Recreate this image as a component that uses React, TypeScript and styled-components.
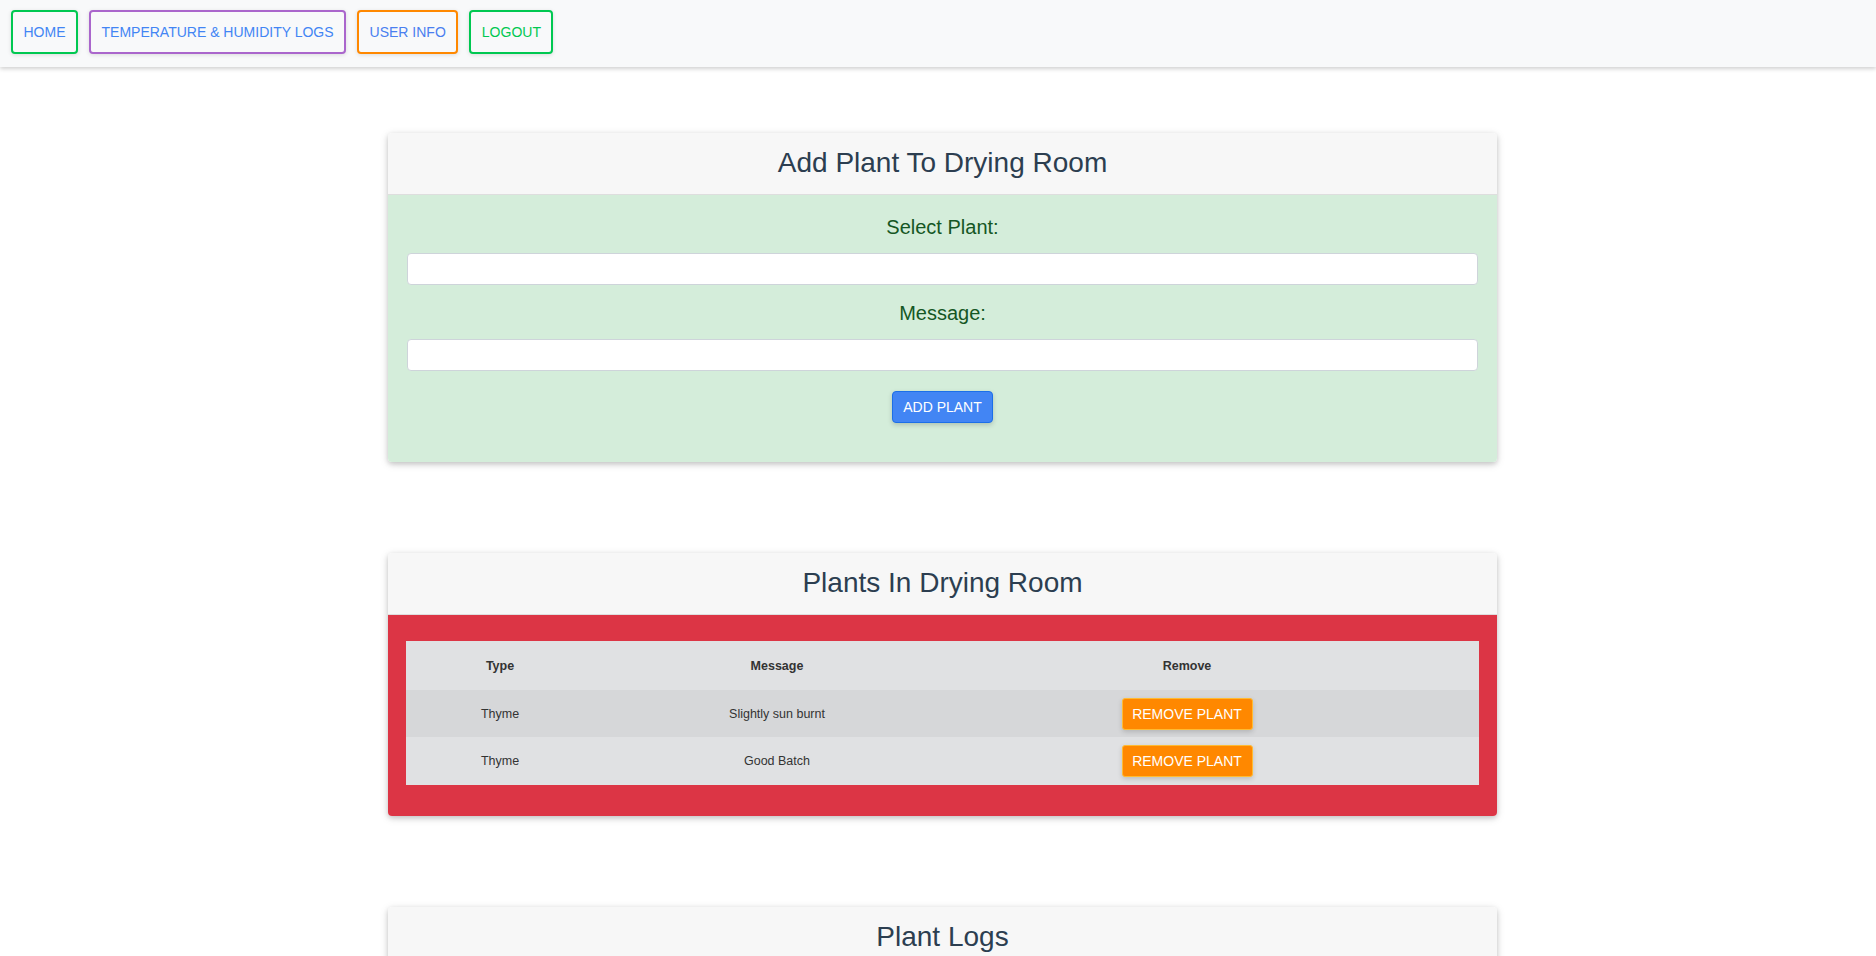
import React from "react";
import styled, { createGlobalStyle } from "styled-components";

const GlobalStyle = createGlobalStyle`
  html, body {
    margin: 0;
    padding: 0;
    background: #ffffff;
    font-family: "Liberation Sans", Arial, Helvetica, sans-serif;
  }
  * { box-sizing: border-box; }
`;

const NavBar = styled.nav`
  height: 67px;
  background: #f8f9fa;
  box-shadow: 0 2px 4px rgba(0, 0, 0, 0.18);
  display: flex;
  align-items: flex-start;
  gap: 11px;
  padding: 10px 10px 0 11px;
  position: relative;
  z-index: 1;
`;

const NavButton = styled.button<{ $border: string; $color: string }>`
  height: 44px;
  padding: 0 10.5px;
  border: 2px solid ${(p) => p.$border};
  border-radius: 4px;
  background: #f8f9fa;
  color: ${(p) => p.$color};
  font-family: "Liberation Sans", Arial, sans-serif;
  font-size: 14px;
  text-transform: uppercase;
  box-shadow: 0 1px 4px rgba(0, 0, 0, 0.12);
  cursor: pointer;
`;

const Main = styled.main`
  display: flex;
  flex-direction: column;
  align-items: center;
  gap: 91px;
  padding: 66px 0 40px 9px;
`;

const Card = styled.section`
  width: 1109px;
  background: #ffffff;
  border-radius: 4px;
  overflow: hidden;
  box-shadow: 0 2px 5px 0 rgba(0, 0, 0, 0.16), 0 2px 10px 0 rgba(0, 0, 0, 0.12);
`;

const CardHeader = styled.header`
  height: 62px;
  background: #f7f7f7;
  border-bottom: 1px solid #dedede;
  display: flex;
  align-items: center;
  justify-content: center;
  padding-bottom: 2px;
  font-size: 28px;
  color: #2c3e50;
`;

const FormBody = styled.div`
  background: #d4edda;
  display: flex;
  flex-direction: column;
  padding: 20px 19px 39px;
`;

const Label = styled.label`
  font-size: 20px;
  line-height: 24px;
  color: #155724;
  text-align: center;
  margin-bottom: 14px;
`;

const TextInput = styled.input<{ $gap: number }>`
  height: 32px;
  border: 1px solid #ced4da;
  border-radius: 4px;
  background: #ffffff;
  margin-bottom: ${(p) => p.$gap}px;
  padding: 0 10px;
  font-size: 14px;
`;

const PrimaryButton = styled.button`
  align-self: center;
  width: 101px;
  height: 32px;
  background: #4285f4;
  border: 1px solid #1c6fe8;
  border-radius: 4px;
  color: #ffffff;
  font-family: "Liberation Sans", Arial, sans-serif;
  font-size: 14px;
  text-transform: uppercase;
  padding: 0;
  box-shadow: 0 2px 5px rgba(0, 0, 0, 0.18);
  cursor: pointer;
`;

const TableBody = styled.div`
  background: #dc3545;
  padding: 26px 18px 31px;
`;

const Table = styled.div`
  display: grid;
  grid-template-columns: 188px 366px 1fr;
  color: #333333;
  font-size: 12.5px;
`;

const Row = styled.div<{ $bg: string; $h: number }>`
  display: contents;
  & > div {
    background: ${(p) => p.$bg};
    height: ${(p) => p.$h}px;
  }
`;

const Cell = styled.div<{ $head?: boolean; $shift?: boolean }>`
  display: flex;
  align-items: center;
  justify-content: center;
  font-weight: ${(p) => (p.$head ? 700 : 400)};
  padding-right: ${(p) => (p.$shift ? 65 : 0)}px;
`;

const RemoveButton = styled.button`
  width: 131px;
  height: 32px;
  background: #ff8800;
  border: 1px solid #ffbb33;
  border-radius: 3px;
  color: #ffffff;
  font-family: "Liberation Sans", Arial, sans-serif;
  font-size: 14px;
  text-transform: uppercase;
  padding: 0;
  box-shadow: 0 2px 5px rgba(0, 0, 0, 0.16);
  cursor: pointer;
`;

const LogsBody = styled.div`
  background: #ffffff;
  height: 120px;
`;

const plants = [
  { type: "Thyme", message: "Slightly sun burnt" },
  { type: "Thyme", message: "Good Batch" },
];

export default function App() {
  return (
    <>
      <GlobalStyle />
      <NavBar>
        <NavButton $border="#00c851" $color="#4285f4">Home</NavButton>
        <NavButton $border="#aa66cc" $color="#4285f4">Temperature &amp; Humidity Logs</NavButton>
        <NavButton $border="#ff8800" $color="#4a7ff0">User Info</NavButton>
        <NavButton $border="#00c851" $color="#00c851">Logout</NavButton>
      </NavBar>
      <Main>
        <Card>
          <CardHeader>Add Plant To Drying Room</CardHeader>
          <FormBody>
            <Label>Select Plant:</Label>
            <TextInput $gap={16} />
            <Label>Message:</Label>
            <TextInput $gap={20} />
            <PrimaryButton>Add Plant</PrimaryButton>
          </FormBody>
        </Card>

        <Card>
          <CardHeader>Plants In Drying Room</CardHeader>
          <TableBody>
            <Table>
              <Row $bg="#e0e1e3" $h={49}>
                <Cell $head>Type</Cell>
                <Cell $head>Message</Cell>
                <Cell $head $shift>Remove</Cell>
              </Row>
              {plants.map((p, i) => (
                <Row key={i} $bg={i % 2 === 0 ? "#d6d7d9" : "#e0e1e3"} $h={i === 0 ? 47 : 48}>
                  <Cell>{p.type}</Cell>
                  <Cell>{p.message}</Cell>
                  <Cell $shift>
                    <RemoveButton>Remove Plant</RemoveButton>
                  </Cell>
                </Row>
              ))}
            </Table>
          </TableBody>
        </Card>

        <Card>
          <CardHeader>Plant Logs</CardHeader>
          <LogsBody />
        </Card>
      </Main>
    </>
  );
}
